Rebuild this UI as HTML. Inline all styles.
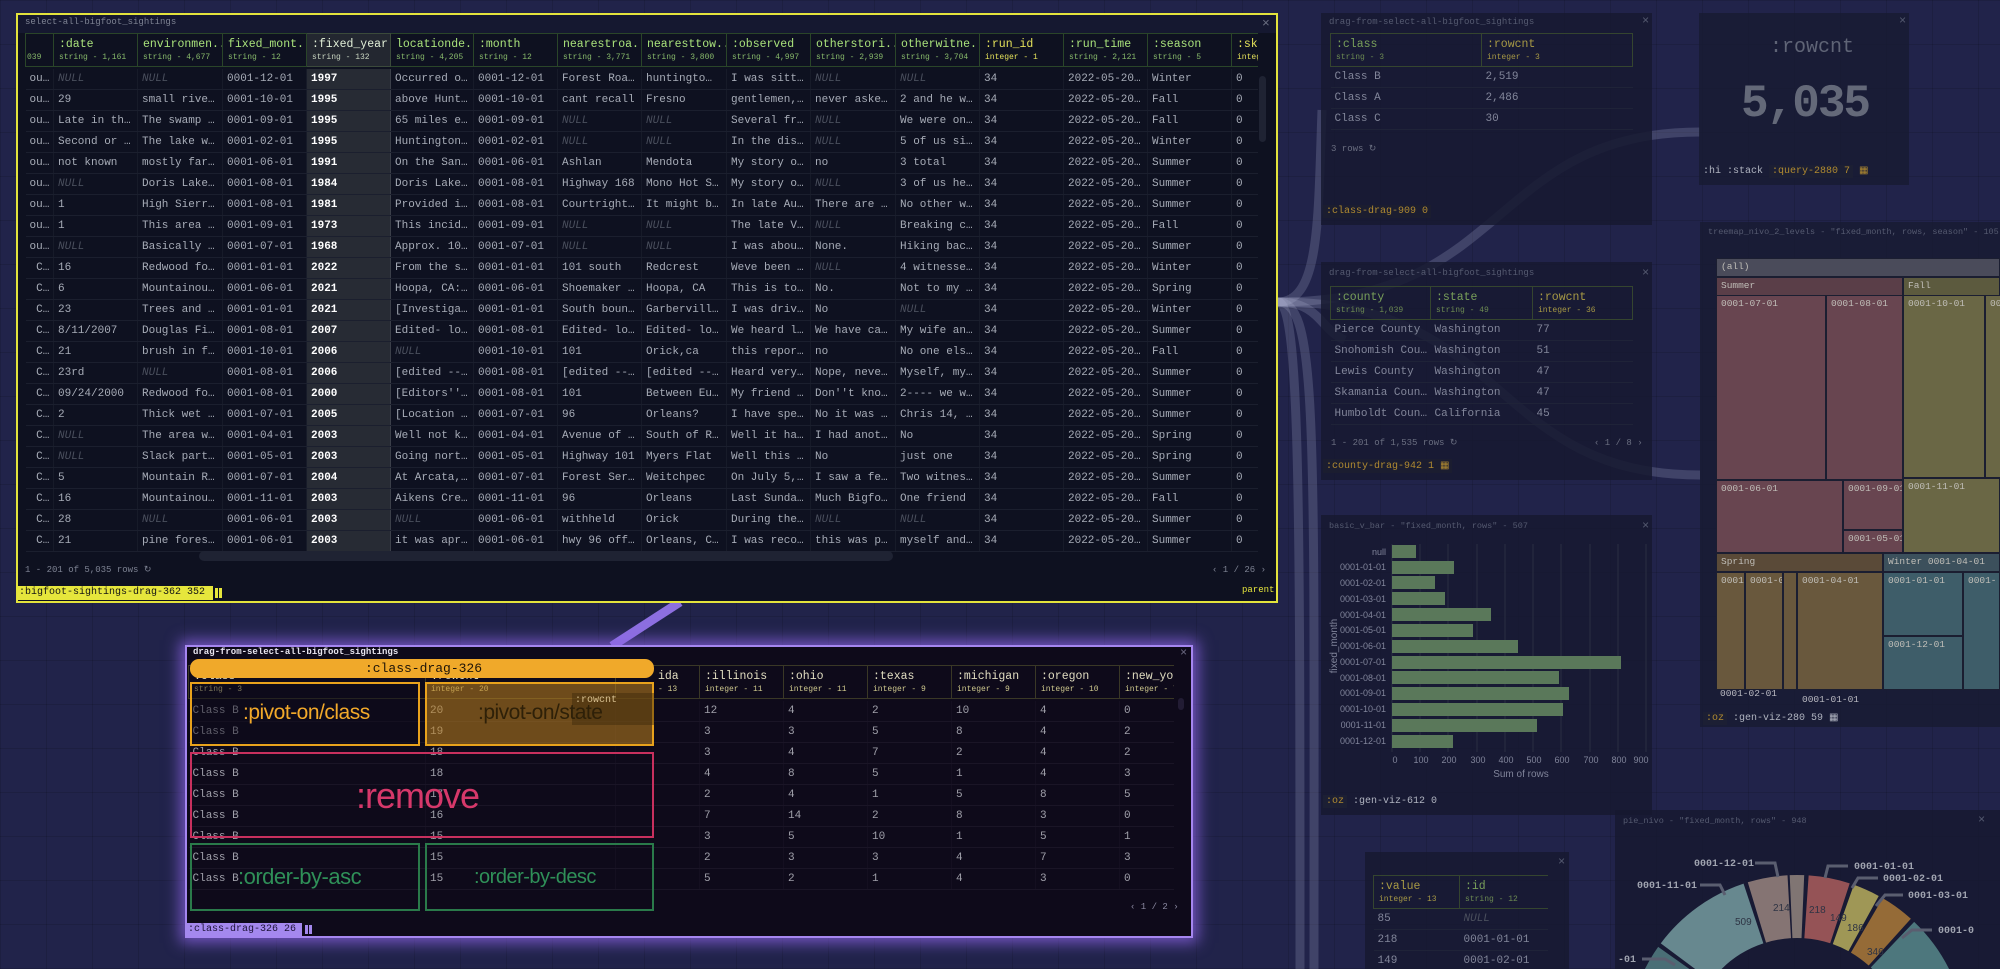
<!DOCTYPE html>
<html style="overflow:hidden"><head><meta charset="utf-8"><style>
*{margin:0;padding:0;box-sizing:border-box}
html,body{width:2000px;height:969px;overflow:hidden}
body{position:relative;font-family:"Liberation Mono",monospace;background:#21234a;
background-image:linear-gradient(rgba(0,0,0,.12) 1px,transparent 1px),linear-gradient(90deg,rgba(0,0,0,.12) 1px,transparent 1px);background-size:46px 44px}
.a{position:absolute}
.t{border-collapse:collapse;table-layout:fixed}
.t td{height:21px;border-bottom:1px solid #1b1f2e;border-right:1px solid #171b29;padding:0 0 0 4px;color:#a7acb7;font-size:11px;white-space:nowrap;overflow:hidden;vertical-align:middle}
.t th{height:33px;border:1px solid #2a4529;padding:1px 5px;text-align:left;font-weight:normal;white-space:nowrap;overflow:hidden;vertical-align:middle}
.t th b{display:block;font-size:11.5px;color:#a9e27b;font-weight:normal;line-height:14px}
.t th s{display:block;font-size:8px;color:#87b96a;text-decoration:none;line-height:11px}
.t th.i b,.t th.i s{color:#e4e15a}
.t td.y{background:#272b34;color:#fff;font-weight:bold;border-left:1px solid #3b3f49;border-right:1px solid #3b3f49}
.t th.y{background:#232730;border-color:#3b4a3b}.t th.y b{color:#e2f0d8}.t th.y s{color:#c8d4c0}
i.n{color:#4a4f5d;font-style:italic}
.p td{color:#a0a0aa;border-bottom:1px solid #1a1526;border-right:1px solid #140f20}
.p th{border-color:#3a3826}.p th b{color:#e0dcc0}.p th s{color:#cfc98e}
.d td{color:#82869a;border-bottom:1px solid #1f2338;border-right:none}
.d th{border-color:#35452f}.d th b{color:#79a05a}.d th s{color:#6c8a52}.d th.i b,.d th.i s{color:#a89a45}
.sm{font-size:9px;color:#7d8292}
.tm div{position:absolute;border:1px solid #1b1e31;font-size:9.5px;color:#c0beb8;padding:2px 4px;overflow:hidden;white-space:nowrap}
</style></head><body>

<svg class="a" style="left:0;top:0" width="2000" height="969">
<g fill="none" stroke="rgba(190,195,225,.2)" stroke-width="9">
<path d="M1278,302 C1320,302 1318,220 1322,110"/>
<path d="M1278,302 C1510,302 1490,132 1700,132"/>
<path d="M1278,302 C1510,302 1490,475 1700,475"/>
<path d="M1278,302 C1318,302 1314,420 1314,969"/>
<path d="M1278,302 C1300,302 1300,500 1300,969"/>
<path d="M1278,302 C1320,302 1320,330 1345,340"/>
</g>
<path d="M680,602 L612,646" stroke="#8d6fe0" stroke-width="9"/>
</svg>

<div class="a" style="left:16px;top:13px;width:1262px;height:590px;border:2px solid #e3e33c;background:#0e1120"></div>
<div class="a" style="left:18px;top:15px;width:1258px;height:18px;background:#151830"></div>
<div class="a sm" style="left:25px;top:17px">select-all-bigfoot_sightings</div>
<div class="a" style="left:1262px;top:16px;color:#6a6e80;font-size:13px">×</div>
<div class="a" style="left:25px;top:33px;width:1233px;height:523px;overflow:hidden">
<table class="t" style="width:1233px">
<colgroup><col style="width:28px"><col style="width:84px"><col style="width:85px"><col style="width:84px"><col style="width:84px"><col style="width:83px"><col style="width:84px"><col style="width:84px"><col style="width:85px"><col style="width:84px"><col style="width:85px"><col style="width:84px"><col style="width:84px"><col style="width:84px"><col style="width:84px"><col style="width:27px"></colgroup>
<tr><th style="padding:0 1px"><b>&nbsp;</b><s>039</s></th><th><b>:date</b><s>string - 1,161</s></th><th><b>environmen..</b><s>string - 4,677</s></th><th><b>fixed_mont..</b><s>string - 12</s></th><th class="y"><b>:fixed_year</b><s>string - 132</s></th><th><b>locationde..</b><s>string - 4,205</s></th><th><b>:month</b><s>string - 12</s></th><th><b>nearestroa..</b><s>string - 3,771</s></th><th><b>nearesttow..</b><s>string - 3,800</s></th><th><b>:observed</b><s>string - 4,997</s></th><th><b>otherstori..</b><s>string - 2,939</s></th><th><b>otherwitne..</b><s>string - 3,704</s></th><th class="i"><b>:run_id</b><s>integer - 1</s></th><th><b>:run_time</b><s>string - 2,121</s></th><th><b>:season</b><s>string - 5</s></th><th class="i"><b>:sk</b><s>integ</s></th></tr>
<tr><td colspan="16" style="height:2px;border:none;padding:0"></td></tr>
<tr><td>ou…</td><td><i class=n>NULL</i></td><td><i class=n>NULL</i></td><td>0001-12-01</td><td class=y>1997</td><td>Occurred o…</td><td>0001-12-01</td><td>Forest Roa…</td><td>huntingto…</td><td>I was sitt…</td><td><i class=n>NULL</i></td><td><i class=n>NULL</i></td><td>34</td><td>2022-05-20…</td><td>Winter</td><td>0</td></tr>
<tr><td>ou…</td><td>29</td><td>small rive…</td><td>0001-10-01</td><td class=y>1995</td><td>above Hunt…</td><td>0001-10-01</td><td>cant recall</td><td>Fresno</td><td>gentlemen,…</td><td>never aske…</td><td>2 and he w…</td><td>34</td><td>2022-05-20…</td><td>Fall</td><td>0</td></tr>
<tr><td>ou…</td><td>Late in th…</td><td>The swamp …</td><td>0001-09-01</td><td class=y>1995</td><td>65 miles e…</td><td>0001-09-01</td><td><i class=n>NULL</i></td><td><i class=n>NULL</i></td><td>Several fr…</td><td><i class=n>NULL</i></td><td>We were on…</td><td>34</td><td>2022-05-20…</td><td>Fall</td><td>0</td></tr>
<tr><td>ou…</td><td>Second or …</td><td>The lake w…</td><td>0001-02-01</td><td class=y>1995</td><td>Huntington…</td><td>0001-02-01</td><td><i class=n>NULL</i></td><td><i class=n>NULL</i></td><td>In the dis…</td><td><i class=n>NULL</i></td><td>5 of us si…</td><td>34</td><td>2022-05-20…</td><td>Winter</td><td>0</td></tr>
<tr><td>ou…</td><td>not known</td><td>mostly far…</td><td>0001-06-01</td><td class=y>1991</td><td>On the San…</td><td>0001-06-01</td><td>Ashlan</td><td>Mendota</td><td>My story o…</td><td>no</td><td>3 total</td><td>34</td><td>2022-05-20…</td><td>Summer</td><td>0</td></tr>
<tr><td>ou…</td><td><i class=n>NULL</i></td><td>Doris Lake…</td><td>0001-08-01</td><td class=y>1984</td><td>Doris Lake…</td><td>0001-08-01</td><td>Highway 168</td><td>Mono Hot S…</td><td>My story o…</td><td><i class=n>NULL</i></td><td>3 of us he…</td><td>34</td><td>2022-05-20…</td><td>Summer</td><td>0</td></tr>
<tr><td>ou…</td><td>1</td><td>High Sierr…</td><td>0001-08-01</td><td class=y>1981</td><td>Provided i…</td><td>0001-08-01</td><td>Courtright…</td><td>It might b…</td><td>In late Au…</td><td>There are …</td><td>No other w…</td><td>34</td><td>2022-05-20…</td><td>Summer</td><td>0</td></tr>
<tr><td>ou…</td><td>1</td><td>This area …</td><td>0001-09-01</td><td class=y>1973</td><td>This incid…</td><td>0001-09-01</td><td><i class=n>NULL</i></td><td><i class=n>NULL</i></td><td>The late V…</td><td><i class=n>NULL</i></td><td>Breaking c…</td><td>34</td><td>2022-05-20…</td><td>Fall</td><td>0</td></tr>
<tr><td>ou…</td><td><i class=n>NULL</i></td><td>Basically …</td><td>0001-07-01</td><td class=y>1968</td><td>Approx. 10…</td><td>0001-07-01</td><td><i class=n>NULL</i></td><td><i class=n>NULL</i></td><td>I was abou…</td><td>None.</td><td>Hiking bac…</td><td>34</td><td>2022-05-20…</td><td>Summer</td><td>0</td></tr>
<tr><td>&nbsp;C…</td><td>16</td><td>Redwood fo…</td><td>0001-01-01</td><td class=y>2022</td><td>From the s…</td><td>0001-01-01</td><td>101 south</td><td>Redcrest</td><td>Weve been …</td><td><i class=n>NULL</i></td><td>4 witnesse…</td><td>34</td><td>2022-05-20…</td><td>Winter</td><td>0</td></tr>
<tr><td>&nbsp;C…</td><td>6</td><td>Mountainou…</td><td>0001-06-01</td><td class=y>2021</td><td>Hoopa, CA:…</td><td>0001-06-01</td><td>Shoemaker …</td><td>Hoopa, CA</td><td>This is to…</td><td>No.</td><td>Not to my …</td><td>34</td><td>2022-05-20…</td><td>Spring</td><td>0</td></tr>
<tr><td>&nbsp;C…</td><td>23</td><td>Trees and …</td><td>0001-01-01</td><td class=y>2021</td><td>[Investiga…</td><td>0001-01-01</td><td>South boun…</td><td>Garbervill…</td><td>I was driv…</td><td>No</td><td><i class=n>NULL</i></td><td>34</td><td>2022-05-20…</td><td>Winter</td><td>0</td></tr>
<tr><td>&nbsp;C…</td><td>8/11/2007</td><td>Douglas Fi…</td><td>0001-08-01</td><td class=y>2007</td><td>Edited- lo…</td><td>0001-08-01</td><td>Edited- lo…</td><td>Edited- lo…</td><td>We heard l…</td><td>We have ca…</td><td>My wife an…</td><td>34</td><td>2022-05-20…</td><td>Summer</td><td>0</td></tr>
<tr><td>&nbsp;C…</td><td>21</td><td>brush in f…</td><td>0001-10-01</td><td class=y>2006</td><td><i class=n>NULL</i></td><td>0001-10-01</td><td>101</td><td>Orick,ca</td><td>this repor…</td><td>no</td><td>No one els…</td><td>34</td><td>2022-05-20…</td><td>Fall</td><td>0</td></tr>
<tr><td>&nbsp;C…</td><td>23rd</td><td><i class=n>NULL</i></td><td>0001-08-01</td><td class=y>2006</td><td>[edited --…</td><td>0001-08-01</td><td>[edited --…</td><td>[edited --…</td><td>Heard very…</td><td>Nope, neve…</td><td>Myself, my…</td><td>34</td><td>2022-05-20…</td><td>Summer</td><td>0</td></tr>
<tr><td>&nbsp;C…</td><td>09/24/2000</td><td>Redwood fo…</td><td>0001-08-01</td><td class=y>2000</td><td>[Editors''…</td><td>0001-08-01</td><td>101</td><td>Between Eu…</td><td>My friend …</td><td>Don''t kno…</td><td>2---- we w…</td><td>34</td><td>2022-05-20…</td><td>Summer</td><td>0</td></tr>
<tr><td>&nbsp;C…</td><td>2</td><td>Thick wet …</td><td>0001-07-01</td><td class=y>2005</td><td>[Location …</td><td>0001-07-01</td><td>96</td><td>Orleans?</td><td>I have spe…</td><td>No it was …</td><td>Chris 14, …</td><td>34</td><td>2022-05-20…</td><td>Summer</td><td>0</td></tr>
<tr><td>&nbsp;C…</td><td><i class=n>NULL</i></td><td>The area w…</td><td>0001-04-01</td><td class=y>2003</td><td>Well not k…</td><td>0001-04-01</td><td>Avenue of …</td><td>South of R…</td><td>Well it ha…</td><td>I had anot…</td><td>No</td><td>34</td><td>2022-05-20…</td><td>Spring</td><td>0</td></tr>
<tr><td>&nbsp;C…</td><td><i class=n>NULL</i></td><td>Slack part…</td><td>0001-05-01</td><td class=y>2003</td><td>Going nort…</td><td>0001-05-01</td><td>Highway 101</td><td>Myers Flat</td><td>Well this …</td><td>No</td><td>just one</td><td>34</td><td>2022-05-20…</td><td>Spring</td><td>0</td></tr>
<tr><td>&nbsp;C…</td><td>5</td><td>Mountain R…</td><td>0001-07-01</td><td class=y>2004</td><td>At Arcata,…</td><td>0001-07-01</td><td>Forest Ser…</td><td>Weitchpec</td><td>On July 5,…</td><td>I saw a fe…</td><td>Two witnes…</td><td>34</td><td>2022-05-20…</td><td>Summer</td><td>0</td></tr>
<tr><td>&nbsp;C…</td><td>16</td><td>Mountainou…</td><td>0001-11-01</td><td class=y>2003</td><td>Aikens Cre…</td><td>0001-11-01</td><td>96</td><td>Orleans</td><td>Last Sunda…</td><td>Much Bigfo…</td><td>One friend</td><td>34</td><td>2022-05-20…</td><td>Fall</td><td>0</td></tr>
<tr><td>&nbsp;C…</td><td>28</td><td><i class=n>NULL</i></td><td>0001-06-01</td><td class=y>2003</td><td><i class=n>NULL</i></td><td>0001-06-01</td><td>withheld</td><td>Orick</td><td>During the…</td><td><i class=n>NULL</i></td><td><i class=n>NULL</i></td><td>34</td><td>2022-05-20…</td><td>Summer</td><td>0</td></tr>
<tr><td>&nbsp;C…</td><td>21</td><td>pine fores…</td><td>0001-06-01</td><td class=y>2003</td><td>it was apr…</td><td>0001-06-01</td><td>hwy 96 off…</td><td>Orleans, C…</td><td>I was reco…</td><td>this was p…</td><td>myself and…</td><td>34</td><td>2022-05-20…</td><td>Summer</td><td>0</td></tr>
</table></div>
<div class="a" style="left:1259px;top:76px;width:7px;height:66px;border-radius:4px;background:#1f2333"></div>
<div class="a" style="left:199px;top:551px;width:694px;height:10px;border-radius:5px;background:#1f2333"></div>
<div class="a sm" style="left:25px;top:565px">1 - 201 of 5,035 rows ↻</div>
<div class="a sm" style="left:1212px;top:565px">‹ 1 / 26 ›</div>
<div class="a" style="left:17px;top:586px;width:196px;height:14px;background:#e6e63c;color:#151515;font-size:10px;line-height:14px;padding-left:2px">:bigfoot-sightings-drag-362 352</div>
<div class="a" style="left:215px;top:588px;width:7px;height:10px;background:linear-gradient(90deg,#e6e63c 3px,transparent 3px,transparent 4px,#e6e63c 4px)"></div>
<div class="a" style="left:1242px;top:585px;color:#e6e63c;font-size:9px">parent</div>

<div class="a" style="left:185px;top:645px;width:1008px;height:293px;border:2px solid #a586f0;background:#0e0a1a;box-shadow:0 0 14px 5px rgba(140,100,230,.75)"></div>
<div class="a" style="left:193px;top:647px;color:#e8e6f0;font-size:9px;font-weight:bold">drag-from-select-all-bigfoot_sightings</div>
<div class="a" style="left:1180px;top:646px;color:#6a6880;font-size:12px">×</div>
<div class="a" style="left:188px;top:665px;width:986px;height:230px;overflow:hidden">
<table class="t p" style="width:1031px">
<colgroup><col style="width:237px"><col style="width:190px"><col style="width:84px"><col style="width:84px"><col style="width:84px"><col style="width:84px"><col style="width:84px"><col style="width:84px"><col style="width:100px"></colgroup>
<tr><th><b>:class</b><s>string - 3</s></th><th><b>:rowcnt</b><s>integer - 20</s></th><th style="padding-left:42px"><b>ida</b><s>- 13</s></th><th><b>:illinois</b><s>integer - 11</s></th><th><b>:ohio</b><s>integer - 11</s></th><th><b>:texas</b><s>integer - 9</s></th><th><b>:michigan</b><s>integer - 9</s></th><th><b>:oregon</b><s>integer - 10</s></th><th><b>:new_york</b><s>integer - 7</s></th></tr>
<tr><td colspan="9" style="height:2px;border:none;padding:0"></td></tr>
<tr><td>Class B</td><td>20</td><td></td><td>12</td><td>4</td><td>2</td><td>10</td><td>4</td><td>0</td></tr>
<tr><td>Class B</td><td>19</td><td></td><td>3</td><td>3</td><td>5</td><td>8</td><td>4</td><td>2</td></tr>
<tr><td>Class B</td><td>18</td><td></td><td>3</td><td>4</td><td>7</td><td>2</td><td>4</td><td>2</td></tr>
<tr><td>Class B</td><td>18</td><td></td><td>4</td><td>8</td><td>5</td><td>1</td><td>4</td><td>3</td></tr>
<tr><td>Class B</td><td>17</td><td></td><td>2</td><td>4</td><td>1</td><td>5</td><td>8</td><td>5</td></tr>
<tr><td>Class B</td><td>16</td><td></td><td>7</td><td>14</td><td>2</td><td>8</td><td>3</td><td>0</td></tr>
<tr><td>Class B</td><td>15</td><td></td><td>3</td><td>5</td><td>10</td><td>1</td><td>5</td><td>1</td></tr>
<tr><td>Class B</td><td>15</td><td></td><td>2</td><td>3</td><td>3</td><td>4</td><td>7</td><td>3</td></tr>
<tr><td>Class B</td><td>15</td><td></td><td>5</td><td>2</td><td>1</td><td>4</td><td>3</td><td>0</td></tr>
</table></div>
<div class="a" style="left:1178px;top:698px;width:6px;height:12px;border-radius:3px;background:#221c34"></div>
<div class="a sm" style="left:1130px;top:902px;color:#8a88a0">‹ 1 / 2 ›</div>
<div class="a" style="left:185px;top:923px;width:117px;height:13px;background:#a488ee;color:#1d1238;font-size:10px;line-height:13px;padding-left:3px">:class-drag-326 26</div>
<div class="a" style="left:305px;top:925px;width:7px;height:9px;background:linear-gradient(90deg,#a488ee 3px,transparent 3px,transparent 4px,#a488ee 4px)"></div>
<div class="a" style="left:190px;top:682px;width:230px;height:64px;border:2px solid #e8a21c;background:rgba(14,10,26,.45)"></div>
<div class="a" style="left:243px;top:701px;color:#f2a92a;font:21px 'Liberation Sans',sans-serif;letter-spacing:-.5px">:pivot-on/class</div>
<div class="a" style="left:425px;top:682px;width:229px;height:64px;border:2px solid #e8a21c;background:rgba(190,130,30,.55)"></div>
<div class="a" style="left:572px;top:693px;width:82px;height:32px;background:rgba(60,40,10,.45);color:#d8c090;font-size:10px;padding:2px 3px">:rowcnt</div>
<div class="a" style="left:478px;top:701px;color:#2e2008;font:21px 'Liberation Sans',sans-serif;letter-spacing:-.5px">:pivot-on/state</div>
<div class="a" style="left:190px;top:752px;width:464px;height:86px;border:2px solid #c8305e"></div>
<div class="a" style="left:356px;top:775px;color:#d6386a;font:36px 'Liberation Sans',sans-serif;letter-spacing:-1px">:remove</div>
<div class="a" style="left:190px;top:843px;width:230px;height:68px;border:2px solid #2a7a4a"></div>
<div class="a" style="left:425px;top:843px;width:229px;height:68px;border:2px solid #2a7a4a"></div>
<div class="a" style="left:238px;top:864px;color:#2f9058;font:22px 'Liberation Sans',sans-serif;letter-spacing:-.5px">:order-by-asc</div>
<div class="a" style="left:474px;top:866px;color:#2f9058;font:20px 'Liberation Sans',sans-serif;letter-spacing:-.5px">:order-by-desc</div>
<div class="a" style="left:190px;top:659px;width:464px;height:19px;border-radius:9px;background:#f0a92a;color:#1e1408;font-size:13px;line-height:19px;padding-left:175px">:class-drag-326</div>

<div class="a" style="left:1321px;top:13px;width:331px;height:212px;background:rgba(22,25,48,.85)"></div>
<div class="a sm" style="left:1329px;top:17px;color:#555a70">drag-from-select-all-bigfoot_sightings</div>
<div class="a" style="left:1642px;top:14px;color:#555a70;font-size:12px">×</div>
<table class="a t d" style="left:1330px;top:33px;width:302px"><colgroup><col style="width:151px"><col style="width:151px"></colgroup>
<tr><th><b>:class</b><s>string - 3</s></th><th class="i"><b>:rowcnt</b><s>integer - 3</s></th></tr>
<tr><td>Class B</td><td>2,519</td></tr><tr><td>Class A</td><td>2,486</td></tr><tr><td>Class C</td><td>30</td></tr></table>
<div class="a sm" style="left:1331px;top:144px;color:#6a6e80">3 rows ↻</div>
<div class="a" style="left:1323px;top:205px;background:#1b1d30;color:#b08a30;font-size:10px;padding:1px 3px">:class-drag-909 0</div>

<div class="a" style="left:1699px;top:13px;width:210px;height:172px;background:rgba(24,27,50,.85)"></div>
<div class="a" style="left:1899px;top:14px;color:#555a70;font-size:12px">×</div>
<div class="a" style="left:1770px;top:36px;color:#5f6476;font-size:20px">:rowcnt</div>
<div class="a" style="left:1741px;top:78px;color:#646979;font-size:46px;font-weight:bold;letter-spacing:-2px">5,035</div>
<div class="a" style="left:1703px;top:165px;color:#b0b4c0;font-size:10px">:hi :stack <span style="background:#1c1f34;color:#b08a30;padding:1px 3px">:query-2880 7</span> <span style="color:#b08a30">▦</span></div>

<div class="a" style="left:1321px;top:262px;width:331px;height:218px;background:rgba(22,25,48,.85)"></div>
<div class="a sm" style="left:1329px;top:268px;color:#555a70">drag-from-select-all-bigfoot_sightings</div>
<div class="a" style="left:1642px;top:266px;color:#555a70;font-size:12px">×</div>
<table class="a t d" style="left:1330px;top:286px;width:302px"><colgroup><col style="width:100px"><col style="width:102px"><col style="width:100px"></colgroup>
<tr><th><b>:county</b><s>string - 1,039</s></th><th><b>:state</b><s>string - 49</s></th><th class="i"><b>:rowcnt</b><s>integer - 36</s></th></tr>
<tr><td>Pierce County</td><td>Washington</td><td>77</td></tr><tr><td>Snohomish Cou…</td><td>Washington</td><td>51</td></tr><tr><td>Lewis County</td><td>Washington</td><td>47</td></tr><tr><td>Skamania Coun…</td><td>Washington</td><td>47</td></tr><tr><td>Humboldt Coun…</td><td>California</td><td>45</td></tr></table>
<div class="a sm" style="left:1331px;top:438px;color:#6a6e80">1 - 201 of 1,535 rows ↻</div>
<div class="a sm" style="left:1594px;top:438px;color:#6a6e80">‹ 1 / 8 ›</div>
<div class="a" style="left:1323px;top:459px;background:#1b1d30;color:#b08a30;font-size:10px;padding:1px 3px">:county-drag-942 1 ▦</div>

<div class="a" style="left:1700px;top:222px;width:300px;height:505px;background:rgba(24,27,50,.85)"></div>
<div class="a sm" style="left:1708px;top:227px;color:#555a70;font-size:8.5px;white-space:nowrap">treemap_nivo_2_levels - "fixed_month, rows, season" - 105</div>
<div class="tm">
<div style="left:1716px;top:258px;width:284px;height:19px;background:#4a4b5a">(all)</div>
<div style="left:1716px;top:277px;width:187px;height:19px;background:#5a3e48">Summer</div>
<div style="left:1903px;top:277px;width:97px;height:19px;background:#5c5a3e">Fall</div>
<div style="left:1716px;top:295px;width:110px;height:185px;background:#684550">0001-07-01</div>
<div style="left:1826px;top:295px;width:77px;height:185px;background:#684550">0001-08-01</div>
<div style="left:1716px;top:480px;width:127px;height:73px;background:#684550">0001-06-01</div>
<div style="left:1843px;top:480px;width:60px;height:50px;background:#684550">0001-09-01</div>
<div style="left:1843px;top:530px;width:60px;height:23px;background:#684550">0001-05-01</div>
<div style="left:1903px;top:295px;width:82px;height:183px;background:#6a6745">0001-10-01</div>
<div style="left:1985px;top:295px;width:20px;height:183px;background:#6a6745">0001</div>
<div style="left:1903px;top:478px;width:97px;height:75px;background:#6a6745">0001-11-01</div>
<div style="left:1716px;top:553px;width:167px;height:19px;background:#5a4a38">Spring</div>
<div style="left:1883px;top:553px;width:117px;height:19px;background:#3c505c">Winter 0001-04-01</div>
<div style="left:1716px;top:572px;width:29px;height:118px;background:#69583d">0001</div>
<div style="left:1745px;top:572px;width:38px;height:118px;background:#69583d">0001-05-01</div>
<div style="left:1783px;top:572px;width:14px;height:118px;background:#69583d"></div>
<div style="left:1797px;top:572px;width:86px;height:118px;background:#69583d">0001-04-01</div>
<div style="left:1883px;top:572px;width:80px;height:64px;background:#3e5d69">0001-01-01</div>
<div style="left:1963px;top:572px;width:37px;height:118px;background:#3e5d69">0001-</div>
<div style="left:1883px;top:636px;width:80px;height:54px;background:#3e5d69">0001-12-01</div>
</div>
<div class="a" style="left:1720px;top:688px;color:#b8b8c0;font-size:9.5px">0001-02-01</div>
<div class="a" style="left:1802px;top:694px;color:#b8b8c0;font-size:9.5px">0001-01-01</div>
<div class="a" style="left:1703px;top:712px;color:#b0b4c0;font-size:10px"><span style="background:#1c1f34;color:#b08a30;padding:1px 3px">:oz</span> :gen-viz-280 59 ▦</div>

<div class="a" style="left:1321px;top:515px;width:331px;height:300px;background:rgba(22,25,48,.85)"></div>
<div class="a sm" style="left:1329px;top:521px;color:#555a70;font-size:8.5px">basic_v_bar - "fixed_month, rows" - 507</div>
<div class="a" style="left:1642px;top:519px;color:#555a70;font-size:12px">×</div>
<svg class="a" style="left:1321px;top:515px" width="331" height="300" font-family="Liberation Sans,sans-serif" font-size="9" fill="#80849a">
<g stroke="#2a2e42" stroke-width="1">
<line x1="71" y1="29" x2="71" y2="237"/><line x1="99" y1="29" x2="99" y2="237"/><line x1="127" y1="29" x2="127" y2="237"/><line x1="156" y1="29" x2="156" y2="237"/><line x1="184" y1="29" x2="184" y2="237"/><line x1="212" y1="29" x2="212" y2="237"/><line x1="240" y1="29" x2="240" y2="237"/><line x1="269" y1="29" x2="269" y2="237"/><line x1="297" y1="29" x2="297" y2="237"/><line x1="325" y1="29" x2="325" y2="237"/>
</g>
<g fill="#5a785a">
<rect x="71" y="30" width="24" height="13"/><rect x="71" y="46" width="62" height="13"/><rect x="71" y="61" width="43" height="13"/><rect x="71" y="77" width="53" height="13"/><rect x="71" y="93" width="99" height="13"/><rect x="71" y="109" width="81" height="13"/><rect x="71" y="125" width="126" height="13"/><rect x="71" y="141" width="229" height="13"/><rect x="71" y="156" width="167" height="13"/><rect x="71" y="172" width="177" height="13"/><rect x="71" y="188" width="171" height="13"/><rect x="71" y="204" width="145" height="13"/><rect x="71" y="220" width="61" height="13"/>
</g>
<g text-anchor="end">
<text x="65" y="40">null</text><text x="65" y="55">0001-01-01</text><text x="65" y="71">0001-02-01</text><text x="65" y="87">0001-03-01</text><text x="65" y="103">0001-04-01</text><text x="65" y="118">0001-05-01</text><text x="65" y="134">0001-06-01</text><text x="65" y="150">0001-07-01</text><text x="65" y="166">0001-08-01</text><text x="65" y="181">0001-09-01</text><text x="65" y="197">0001-10-01</text><text x="65" y="213">0001-11-01</text><text x="65" y="229">0001-12-01</text>
</g>
<g text-anchor="middle">
<text x="74" y="248">0</text><text x="100" y="248">100</text><text x="128" y="248">200</text><text x="157" y="248">300</text><text x="185" y="248">400</text><text x="213" y="248">500</text><text x="241" y="248">600</text><text x="270" y="248">700</text><text x="298" y="248">800</text><text x="320" y="248">900</text>
<text x="200" y="262" font-size="10">Sum of rows</text>
<text transform="translate(16,131) rotate(-90)" font-size="10">fixed_month</text>
</g>
</svg>
<div class="a" style="left:1323px;top:796px;color:#b0b4c0;font-size:10px"><span style="background:#1c1f34;color:#b08a30;padding:1px 3px">:oz</span> :gen-viz-612 0</div>

<div class="a" style="left:1365px;top:852px;width:204px;height:117px;background:rgba(22,25,48,.85)"></div>
<div class="a" style="left:1558px;top:855px;color:#555a70;font-size:12px">×</div>
<div class="a" style="left:1373px;top:875px;width:175px;height:94px;overflow:hidden">
<table class="t d" style="width:175px"><colgroup><col style="width:86px"><col style="width:89px"></colgroup>
<tr><th class="i"><b>:value</b><s>integer - 13</s></th><th><b>:id</b><s>string - 12</s></th></tr>
<tr><td>85</td><td><i class=n>NULL</i></td></tr><tr><td>218</td><td>0001-01-01</td></tr><tr><td>149</td><td>0001-02-01</td></tr></table></div>

<div class="a" style="left:1615px;top:810px;width:385px;height:159px;background:rgba(22,25,48,.85)"></div>
<div class="a sm" style="left:1623px;top:816px;color:#555a70;font-size:8.5px">pie_nivo - "fixed_month, rows" - 948</div>
<div class="a" style="left:1978px;top:813px;color:#555a70;font-size:12px">×</div>
<svg class="a" style="left:0;top:0" width="2000" height="969">
<g transform="translate(1797,1045) rotate(-93.2)" fill="none" stroke-width="63">
<circle r="138.5" stroke="#807573" stroke-dasharray="11.8 870.2" stroke-dashoffset="-1.81"/>
<circle r="138.5" stroke="#955356" stroke-dasharray="34.1 870.2" stroke-dashoffset="-17.28"/>
<circle r="138.5" stroke="#9f9756" stroke-dasharray="22.2 870.2" stroke-dashoffset="-54.99"/>
<circle r="138.5" stroke="#956b37" stroke-dasharray="28.5 870.2" stroke-dashoffset="-80.85"/>
<circle r="138.5" stroke="#4d777d" stroke-dasharray="56.1 870.2" stroke-dashoffset="-113"/>
<circle r="138.5" stroke="#4a7078" stroke-dasharray="45.7 870.2" stroke-dashoffset="-172.7"/>
<circle r="138.5" stroke="#537880" stroke-dasharray="73.2 870.2" stroke-dashoffset="-222"/>
<circle r="138.5" stroke="#4a6e76" stroke-dasharray="134.6 870.2" stroke-dashoffset="-298.9"/>
<circle r="138.5" stroke="#4a6e76" stroke-dasharray="97.4 870.2" stroke-dashoffset="-437.1"/>
<circle r="138.5" stroke="#4a6e76" stroke-dasharray="103.4 870.2" stroke-dashoffset="-538.1"/>
<circle r="138.5" stroke="#4a6e76" stroke-dasharray="100.1 870.2" stroke-dashoffset="-645.2"/>
<circle r="138.5" stroke="#67888f" stroke-dasharray="84.4 870.2" stroke-dashoffset="-748.9"/>
<circle r="138.5" stroke="#857473" stroke-dasharray="33.4 870.2" stroke-dashoffset="-836.9"/>
</g>
<g stroke="#5a5e70" stroke-width="3" fill="none">
<path d="M1755,863 H1775 L1778,877"/><path d="M1700,885 H1720 L1725,895"/><path d="M1848,866 H1828 L1825,878"/><path d="M1878,878 H1858 L1852,888"/><path d="M1903,895 H1885 L1876,906"/><path d="M1932,930 H1912 L1902,938"/><path d="M1642,959 H1665 L1675,965"/>
</g>
<g font-family="Liberation Mono,monospace" font-size="10" font-weight="bold" fill="#a0a4b0">
<text x="1694" y="866">0001-12-01</text><text x="1637" y="888">0001-11-01</text><text x="1854" y="869">0001-01-01</text><text x="1883" y="881">0001-02-01</text><text x="1908" y="898">0001-03-01</text><text x="1938" y="933">0001-0</text><text x="1618" y="962">-01</text>
</g>
<g font-family="Liberation Sans,sans-serif" font-size="10" fill="#2e3444">
<text x="1773" y="911">214</text><text x="1809" y="913">218</text><text x="1830" y="921">149</text><text x="1847" y="931">186</text><text x="1735" y="925">509</text><text x="1867" y="955">346</text>
</g>
</svg>
</body></html>
